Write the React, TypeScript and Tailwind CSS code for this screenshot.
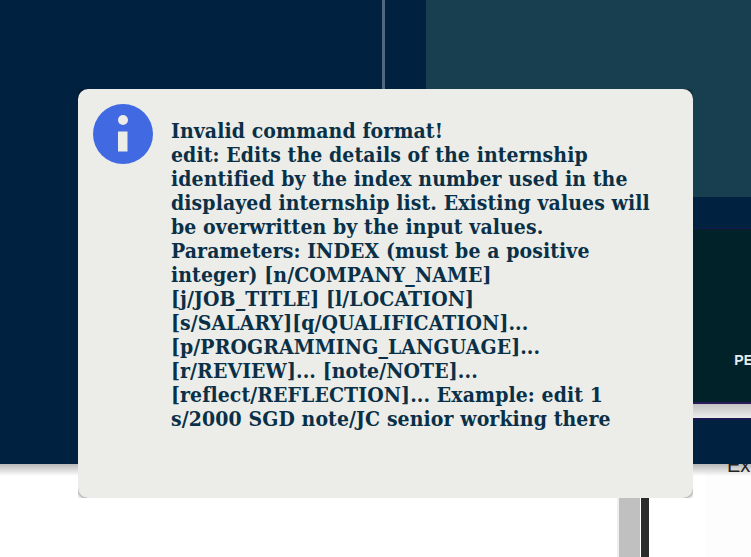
const lines = [
  "Invalid command format!",
  "edit: Edits the details of the internship",
  "identified by the index number used in the",
  "displayed internship list. Existing values will",
  "be overwritten by the input values.",
  "Parameters: INDEX (must be a positive",
  "integer) [n/COMPANY_NAME]",
  "[j/JOB_TITLE] [l/LOCATION]",
  "[s/SALARY][q/QUALIFICATION]...",
  "[p/PROGRAMMING_LANGUAGE]...",
  "[r/REVIEW]... [note/NOTE]...",
  "[reflect/REFLECTION]... Example: edit 1",
  "s/2000 SGD note/JC senior working there",
];

export default function App() {
  return (
    <div className="relative flex h-[557px] w-[751px] flex-col overflow-hidden bg-white font-['DejaVu_Serif_Condensed','DejaVu_Serif',serif]">
      {/* window behind the dialog */}
      <div className="flex h-[464px] bg-[#00213f]">
        <div className="w-[382px]" />
        <div className="w-[3px] bg-[#4f6580]" />
        <div className="w-[41px]" />
        <div className="flex flex-1 flex-col">
          <div className="h-[197px] bg-[#173f50]" />
          <div className="mt-[31px] flex h-[174px] items-end justify-end border-t border-[#1a1650] bg-[#012228] pb-[32px]">
            <span className="-mr-[2px] font-['Liberation_Sans',sans-serif] text-sm font-bold text-[#e4ecf0]">PE</span>
          </div>
          <div className="h-[18px] border-y-2 border-t-[#2a1a5a] border-b-[#1a1650] bg-gradient-to-b from-[#c4c4c4] to-[#ececec]" />
        </div>
      </div>
      <div className="relative flex flex-1 overflow-hidden">
        <div className="ml-[617px] w-[2px] bg-[#efefef]" />
        <div className="w-[21px] bg-[#c0c0c0]" />
        <div className="ml-px w-2 bg-[#2b2b2b]" />
        <div className="ml-[56px] flex-1 bg-[#fdfdfd]" />
        <div className="absolute inset-x-0 top-0 h-[12px] bg-gradient-to-b from-[#b8b8b8] to-white/0" />
        <span className="absolute left-[727px] top-[-13px] font-['Liberation_Sans',sans-serif] text-xl text-[#222]">Ex</span>
      </div>

      {/* alert dialog, square box clips the shadow so it only shows at the corners */}
      <div className="absolute left-[78px] top-[89px] h-[409px] w-[615px] overflow-hidden">
        <div className="flex h-full gap-[18px] rounded-[10px] bg-[#ecede9] pl-[15px] pt-[15px] shadow-[0_0_5px_rgba(0,0,0,0.7)]">
          <svg className="h-[60px] w-[60px] shrink-0 blur-[0.4px]" viewBox="0 0 60 60">
            <circle cx="30" cy="30" r="30" fill="#4169e1" />
            <circle cx="30" cy="16" r="5" fill="#ecede9" />
            <rect x="25" y="27.5" width="9.5" height="20" fill="#ecede9" />
          </svg>
          <p className="mt-[15px] whitespace-nowrap text-[21px] font-bold leading-6 tracking-[0.1px] text-[#0a3048]">
            {lines.map((line) => (
              <span key={line} className="block">
                {line}
              </span>
            ))}
          </p>
        </div>
      </div>
    </div>
  );
}
